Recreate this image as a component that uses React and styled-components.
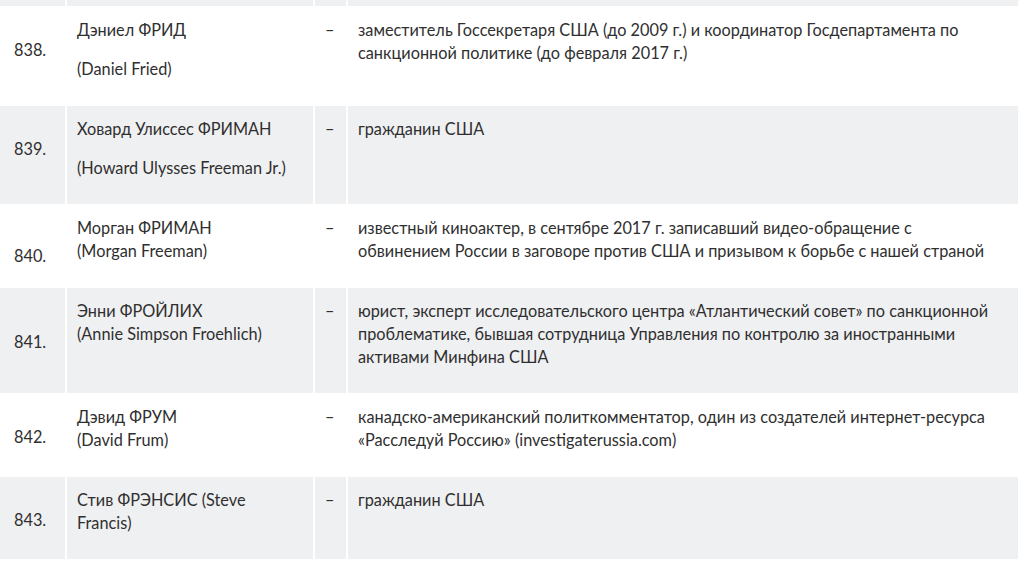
import React from "react";
import styled, { createGlobalStyle } from "styled-components";

const GlobalStyle = createGlobalStyle`
  html, body {
    margin: 0;
    padding: 0;
    background: #fff;
  }
  body {
    font-family: "Lato", "Noto Sans", sans-serif;
    font-size: 16.3px;
    line-height: 23px;
    color: #2f2f2f;
  }
`;

const Table = styled.div`
  width: 1017px;
  display: flex;
  flex-direction: column;
  gap: 1px;
`;

const Row = styled.div`
  display: grid;
  grid-template-columns: 65px 246px 31px 670px;
  column-gap: 2px;
`;

const Cell = styled.div`
  background: ${(p) => (p.$shaded ? "#eff0f2" : "#fff")};
  padding: ${(p) => (p.$strip ? "0" : "11px 10px 9px")};
  height: ${(p) => (p.$strip ? "6px" : "auto")};
  display: flex;
  flex-direction: column;
  justify-content: ${(p) => (p.$middle ? "center" : "flex-start")};
`;

const NumCell = styled(Cell)`
  padding-left: 14px;
`;

const Para = styled.p`
  margin: 0 0 16px;
  white-space: nowrap;
`;

const Num = styled.p`
  margin: ${(p) =>
    p.$shift === "up" ? "0 0 16px" : p.$shift === "down" ? "16px 0 0" : "0"};
`;

const rows = [
  {
    n: "838.",
    shift: "up",
    name: [["Дэниел ФРИД"], ["(Daniel Fried)"]],
    desc: [
      "заместитель Госсекретаря США (до 2009 г.) и координатор Госдепартамента по",
      "санкционной политике (до февраля 2017 г.)",
    ],
  },
  {
    n: "839.",
    shift: "up",
    name: [["Ховард Улиссес ФРИМАН"], ["(Howard Ulysses Freeman Jr.)"]],
    desc: ["гражданин США"],
  },
  {
    n: "840.",
    shift: "down",
    name: [["Морган ФРИМАН", "(Morgan Freeman)"]],
    desc: [
      "известный киноактер, в сентябре 2017 г. записавший видео-обращение с",
      "обвинением России в заговоре против США и призывом к борьбе с нашей страной",
    ],
  },
  {
    n: "841.",
    name: [["Энни ФРОЙЛИХ", "(Annie Simpson Froehlich)"]],
    desc: [
      "юрист, эксперт исследовательского центра «Атлантический совет» по санкционной",
      "проблематике, бывшая сотрудница Управления по контролю за иностранными",
      "активами Минфина США",
    ],
  },
  {
    n: "842.",
    name: [["Дэвид ФРУМ", "(David Frum)"]],
    desc: [
      "канадско-американский политкомментатор, один из создателей интернет-ресурса",
      "«Расследуй Россию» (investigaterussia.com)",
    ],
  },
  {
    n: "843.",
    name: [["Стив ФРЭНСИС (Steve", "Francis)"]],
    desc: ["гражданин США"],
  },
];

const Lines = ({ lines }) => (
  <Para>
    {lines.map((l, i) => (
      <React.Fragment key={i}>
        {i > 0 && <br />}
        {l}
      </React.Fragment>
    ))}
  </Para>
);

export default function App() {
  return (
    <>
      <GlobalStyle />
      <Table>
        <Row>
          <Cell $shaded $strip />
          <Cell $shaded $strip />
          <Cell $shaded $strip />
          <Cell $shaded $strip />
        </Row>
        {rows.map((r, i) => {
          const shaded = i % 2 === 1;
          return (
            <Row key={r.n}>
              <NumCell $shaded={shaded} $middle>
                <Num $shift={r.shift}>{r.n}</Num>
              </NumCell>
              <Cell $shaded={shaded}>
                {r.name.map((p, j) => (
                  <Lines key={j} lines={p} />
                ))}
              </Cell>
              <Cell $shaded={shaded}>
                <Para>–</Para>
              </Cell>
              <Cell $shaded={shaded}>
                <Lines lines={r.desc} />
              </Cell>
            </Row>
          );
        })}
      </Table>
    </>
  );
}
